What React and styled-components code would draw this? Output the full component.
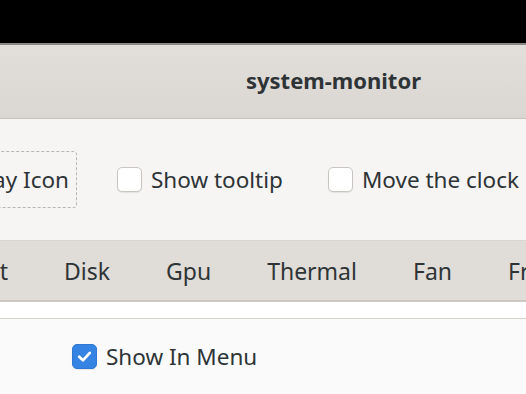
import styled, { createGlobalStyle } from "styled-components";

const Global = createGlobalStyle`
  html, body {
    margin: 0;
    padding: 0;
    background: #fafafa;
    overflow: hidden;
  }
  body {
    font-family: "Noto Sans", "Open Sans", sans-serif;
    color: #2e3436;
  }
`;

const Window = styled.div`
  width: 526px;
  height: 394px;
  display: flex;
  flex-direction: column;
  overflow: hidden;
`;

const Backdrop = styled.div`
  height: 43px;
  background: #000;
  flex-shrink: 0;
`;

const HeaderBar = styled.div`
  height: 73px;
  flex-shrink: 0;
  box-sizing: border-box;
  border-top: 2px solid #8b8987;
  border-bottom: 1px solid #c6c1bc;
  background: linear-gradient(180deg, #e2dfdb 0%, #dad6d2 100%);
  display: flex;
  align-items: center;
  justify-content: center;
  padding: 0 0 3px 141px;
  height: 76px;
`;

const Title = styled.div`
  font-weight: bold;
  font-size: 22px;
  color: #2e3436;
`;

const Toolbar = styled.div`
  height: 121px;
  flex-shrink: 0;
  background: #f6f5f4;
  display: flex;
  align-items: center;
`;

const FocusButton = styled.div`
  width: 150px;
  height: 57px;
  margin-left: -73px;
  box-sizing: border-box;
  border: 1px dashed #b8b5b2;
  border-radius: 4px;
  display: flex;
  align-items: center;
  justify-content: flex-end;
  padding-right: 7px;
  font-size: 22.5px;
`;

const Check = styled.label`
  display: flex;
  align-items: center;
  gap: 9px;
  font-size: 22.5px;
  margin-left: ${(p) => p.$gap}px;
  white-space: nowrap;
`;

const Box = styled.span`
  width: 25px;
  height: 25px;
  box-sizing: border-box;
  border-radius: 5px;
  flex-shrink: 0;
  display: flex;
  align-items: center;
  justify-content: center;
  background: ${(p) => (p.$on ? "#3584e4" : "#ffffff")};
  border: 1px solid ${(p) => (p.$on ? "#2f78d4" : "#c9c5c1")};
  box-shadow: 0 1px 1px rgba(0, 0, 0, 0.08);
`;

const TabBar = styled.div`
  height: 62px;
  flex-shrink: 0;
  border-top: 1px solid #d8d4d0;
  border-bottom: 2px solid #cdc8c3;
  background: #e0dcd8;
  display: flex;
  align-items: center;
  gap: 56px;
  box-sizing: border-box;
`;

const Tab = styled.div`
  font-size: 23px;
  color: #2e3436;
  white-space: nowrap;
  flex-shrink: 0;
  ${(p) => p.$first && "width: 60px; margin-left: -52px; text-align: right;"}
`;

const Strip = styled.div`
  height: 16px;
  flex-shrink: 0;
  background: #ffffff;
  border-bottom: 1px solid #d6d2ce;
`;

const Page = styled.div`
  flex: 1;
  background: #fafafa;
  padding: 22px 0 0 72px;
`;

const Tick = () => (
  <svg width="17" height="17" viewBox="0 0 16 16">
    <path
      d="M3 8.3 L6.5 11.6 L13 4.6"
      fill="none"
      stroke="#fff"
      strokeWidth="2.6"
      strokeLinecap="round"
      strokeLinejoin="round"
    />
  </svg>
);

export default function App() {
  const tabs = ["Net", "Disk", "Gpu", "Thermal", "Fan", "Freq"];
  return (
    <Window>
      <Global />
      <Backdrop />
      <HeaderBar>
        <Title>system-monitor</Title>
      </HeaderBar>
      <Toolbar>
        <FocusButton>Tray Icon</FocusButton>
        <Check $gap={40}>
          <Box />
          Show tooltip
        </Check>
        <Check $gap={45}>
          <Box />
          Move the clock
        </Check>
      </Toolbar>
      <TabBar>
        {tabs.map((t, i) => (
          <Tab key={t} $first={i === 0}>
            {t}
          </Tab>
        ))}
      </TabBar>
      <Strip />
      <Page>
        <Check $gap={0}>
          <Box $on>
            <Tick />
          </Box>
          Show In Menu
        </Check>
      </Page>
    </Window>
  );
}
